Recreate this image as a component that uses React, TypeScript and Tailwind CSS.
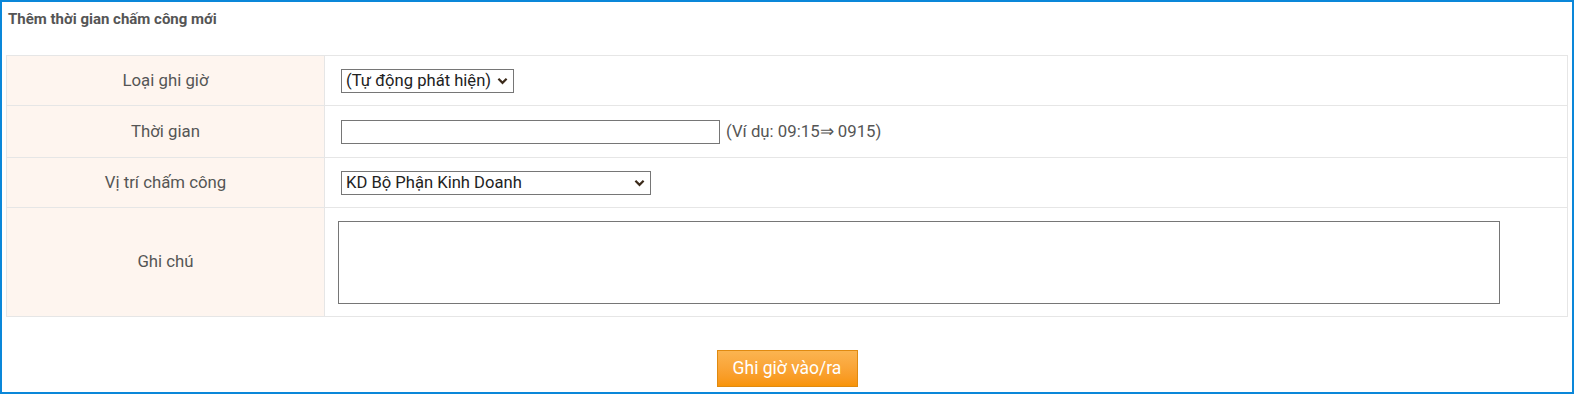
import React from 'react';

function Chevron() {
  return (
    <svg width="11" height="8" viewBox="0 0 11 8" className="pointer-events-none absolute top-1/2 -translate-y-1/2 right-[6px]">
      <path d="M1.4 1.8 L5.5 5.9 L9.6 1.8" fill="none" stroke="#3b2a1a" strokeWidth="2.2" />
    </svg>
  );
}

function Select({ value, width }: { value: string; width: string }) {
  return (
    <div className={`relative inline-block ${width}`}>
      <select
        defaultValue={value}
        className="w-full h-[24px] appearance-none border border-[#767676] bg-white pl-[4px] pr-[20px] text-[16.6px] leading-[22px] text-[#222] outline-none"
      >
        <option>{value}</option>
      </select>
      <Chevron />
    </div>
  );
}

export default function App() {
  const labelCls = 'w-[318px] bg-[#fef5ef] border border-[#e6e6e6] text-center text-[16.8px] text-[#555] font-normal';
  const cellCls = 'border border-[#e6e6e6] align-middle';

  return (
    <div className="w-[1574px] h-[394px] border-2 border-[#0a87d9] bg-white font-['Roboto',sans-serif] flex flex-col">
      <div className="h-[35px] pl-[6px] pt-[7px] text-[15px] font-bold text-[#555] leading-[20px]">
        Thêm thời gian chấm công mới
      </div>
      <div className="pt-[18px] pl-[4px] pr-[4px]">
        <table className="w-full border-collapse">
          <tbody>
            <tr className="h-[50px]">
              <th className={labelCls}>Loại ghi giờ</th>
              <td className={cellCls}>
                <div className="pl-[16px] flex items-center">
                  <Select value="(Tự động phát hiện)" width="w-[173px]" />
                </div>
              </td>
            </tr>
            <tr className="h-[52px]">
              <th className={labelCls}>Thời gian</th>
              <td className={cellCls}>
                <div className="pl-[16px] flex items-center gap-[6px]">
                  <input type="text" className="w-[379px] h-[24px] border border-[#767676] bg-white outline-none" />
                  <span className="text-[16.8px] text-[#555]">(Ví dụ: 09:15⇒ 0915)</span>
                </div>
              </td>
            </tr>
            <tr className="h-[50px]">
              <th className={labelCls}>Vị trí chấm công</th>
              <td className={cellCls}>
                <div className="pl-[16px] flex items-center">
                  <Select value="KD Bộ Phận Kinh Doanh" width="w-[310px]" />
                </div>
              </td>
            </tr>
            <tr className="h-[109px]">
              <th className={labelCls}>Ghi chú</th>
              <td className={cellCls}>
                <div className="pl-[13px] flex items-center">
                  <textarea className="w-[1162px] h-[83px] border border-[#767676] bg-white outline-none resize-none" />
                </div>
              </td>
            </tr>
          </tbody>
        </table>
      </div>
      <div className="flex justify-center pt-[33px]">
        <button className="w-[141px] h-[37px] border border-[#e08a10] bg-gradient-to-b from-[#fbb450] to-[#f89406] text-white text-[17.5px]">
          Ghi giờ vào/ra
        </button>
      </div>
    </div>
  );
}
